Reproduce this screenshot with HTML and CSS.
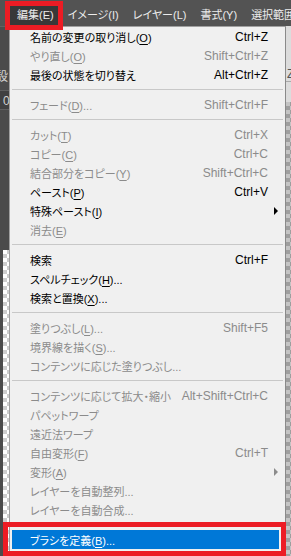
FILE: index.html
```html
<!DOCTYPE html>
<html lang="ja">
<head>
  <meta charset="UTF-8">
  <title>編集メニュー</title>
  <link rel="stylesheet" href="styles.css">
</head>
<body>
  <div class="menubar">
    <span class="menu-title active">編集(E)</span>
    <span class="menu-title">イメージ(I)</span>
    <span class="menu-title">レイヤー(L)</span>
    <span class="menu-title">書式(Y)</span>
    <span class="menu-title">選択範囲(S)</span>
  </div>

  <div class="workspace">
    <div class="side-left">
      <div class="panel-label">設</div>
      <div class="panel-value">0</div>
      <div class="checker"></div>
    </div>

    <div class="dropdown">
      <div class="item"><span>名前の変更の取り消し(<u>O</u>)</span><span class="key">Ctrl+Z</span></div>
      <div class="item off"><span>やり直し(<u>O</u>)</span><span class="key">Shift+Ctrl+Z</span></div>
      <div class="item"><span>最後の状態を切り替え</span><span class="key">Alt+Ctrl+Z</span></div>
      <div class="sep"></div>
      <div class="item off"><span>フェード(<u>D</u>)...</span><span class="key">Shift+Ctrl+F</span></div>
      <div class="sep"></div>
      <div class="item off"><span>カット(<u>T</u>)</span><span class="key">Ctrl+X</span></div>
      <div class="item off"><span>コピー(<u>C</u>)</span><span class="key">Ctrl+C</span></div>
      <div class="item off"><span>結合部分をコピー(<u>Y</u>)</span><span class="key">Shift+Ctrl+C</span></div>
      <div class="item"><span>ペースト(<u>P</u>)</span><span class="key">Ctrl+V</span></div>
      <div class="item"><span>特殊ペースト(<u>I</u>)</span><span class="key"></span><span class="arrow"></span></div>
      <div class="item off"><span>消去(<u>E</u>)</span></div>
      <div class="sep"></div>
      <div class="item"><span>検索</span><span class="key">Ctrl+F</span></div>
      <div class="item"><span>スペルチェック(<u>H</u>)...</span></div>
      <div class="item"><span>検索と置換(<u>X</u>)...</span></div>
      <div class="sep"></div>
      <div class="item off"><span>塗りつぶし(<u>L</u>)...</span><span class="key">Shift+F5</span></div>
      <div class="item off"><span>境界線を描く(<u>S</u>)...</span></div>
      <div class="item off"><span>コンテンツに応じた塗りつぶし...</span></div>
      <div class="sep"></div>
      <div class="item off"><span>コンテンツに応じて拡大・縮小</span><span class="key">Alt+Shift+Ctrl+C</span></div>
      <div class="item off"><span>パペットワープ</span></div>
      <div class="item off"><span>遠近法ワープ</span></div>
      <div class="item off"><span>自由変形(<u>F</u>)</span><span class="key">Ctrl+T</span></div>
      <div class="item off"><span>変形(<u>A</u>)</span><span class="key"></span><span class="arrow"></span></div>
      <div class="item off"><span>レイヤーを自動整列...</span></div>
      <div class="item off"><span>レイヤーを自動合成...</span></div>
      <div class="sep"></div>
      <div class="item current"><span>ブラシを定義(<u>B</u>)...</span></div>
    </div>

    <div class="side-right">
      <div class="panel-label">Z</div>
      <div class="checker"></div>
    </div>
  </div>

  <div class="mark mark-edit"></div>
  <div class="mark mark-brush"></div>
</body>
</html>
```

FILE: styles.css
```css
* {
  margin: 0;
  padding: 0;
  box-sizing: border-box;
}

html, body {
  width: 291px;
  height: 556px;
  overflow: hidden;
}

body {
  position: relative;
  font-family: "Liberation Sans", "Noto Sans CJK JP", sans-serif;
  font-size: 12px;
  font-feature-settings: "palt";
  background-color: #535353;
}

/* top menu bar */
.menubar {
  display: flex;
  height: 26px;
  padding-left: 10px;
  background-color: #535353;
  color: #ececec;
  font-size: 11px;
  white-space: nowrap;
}

.menu-title {
  height: 19px;
  margin-top: 6px;
  padding: 0 7px;
  line-height: 18px;
}

.menu-title.active {
  background-color: #383838;
}

.workspace {
  display: flex;
  height: 530px;
}

/* panels peeking out behind the menu */
.side-left {
  display: flex;
  flex-direction: column;
  width: 9px;
  overflow: hidden;
  background-color: #4b4b4b;
  border-top: 1px solid #626262;
  color: #d2d2d2;
}

.side-left .panel-label {
  margin-top: 43px;
  height: 15px;
  line-height: 15px;
  text-indent: -4px;
}

.side-left .panel-value {
  margin-top: 5px;
  height: 20px;
  padding-left: 3px;
  line-height: 20px;
  background-color: #404040;
  border-top: 1px solid #5e5e5e;
  border-bottom: 1px solid #5e5e5e;
}

.side-left .checker {
  margin: 140px 0 0 3px;
  flex: 1;
}

.side-right {
  display: flex;
  flex-direction: column;
  flex: 1;
  overflow: hidden;
  background-color: #dcdcdc;
  color: #555;
}

.side-right .panel-label {
  margin-top: 40px;
  height: 16px;
  line-height: 16px;
  text-indent: 1px;
  border-bottom: 1px solid #aaa;
}

.side-right .checker {
  flex: 1;
  margin-top: 20px;
  background-color: #c4c4c4;
  background-image: conic-gradient(#9e9e9e 25%, #c4c4c4 0 50%, #9e9e9e 0 75%, #c4c4c4 0);
}

.checker {
  background-color: #fff;
  background-image: conic-gradient(#cdcdcd 25%, #fff 0 50%, #cdcdcd 0 75%, #fff 0);
  background-size: 8px 8px;
}

/* dropdown */
.dropdown {
  width: 277px;
  padding: 0 2px;
  background-color: #f0f0f0;
  border: 1px solid #a0a0a0;
  border-right-color: #8a8a8a;
  border-bottom: none;
}

.item {
  display: grid;
  grid-template-columns: 1fr auto 15px;
  align-items: center;
  height: 19px;
  padding-left: 18px;
  color: #000;
  font-size: 11px;
  white-space: nowrap;
}

.item .key {
  font-size: 12px;
}

.item.off {
  color: #8b8b8b;
}

.item.current {
  margin-right: 4px;
  background-color: #0078d7;
  color: #fff;
}

.item u {
  text-underline-offset: 2px;
}

.arrow {
  width: 0;
  height: 0;
  margin-left: 6px;
  border-left: 4px solid currentColor;
  border-top: 4px solid transparent;
  border-bottom: 4px solid transparent;
}

.sep {
  display: flex;
  align-items: center;
  height: 11px;
}

.sep::before {
  content: "";
  flex: 1;
  height: 1px;
  background-color: #c8c8c8;
}

/* red annotation frames */
.mark {
  position: absolute;
  border: 5px solid #ec1c24;
}

.mark-edit {
  left: 5px;
  top: 1px;
  width: 58px;
  height: 29px;
}

.mark-brush {
  left: 3px;
  top: 522px;
  width: 283px;
  height: 34px;
}
```
